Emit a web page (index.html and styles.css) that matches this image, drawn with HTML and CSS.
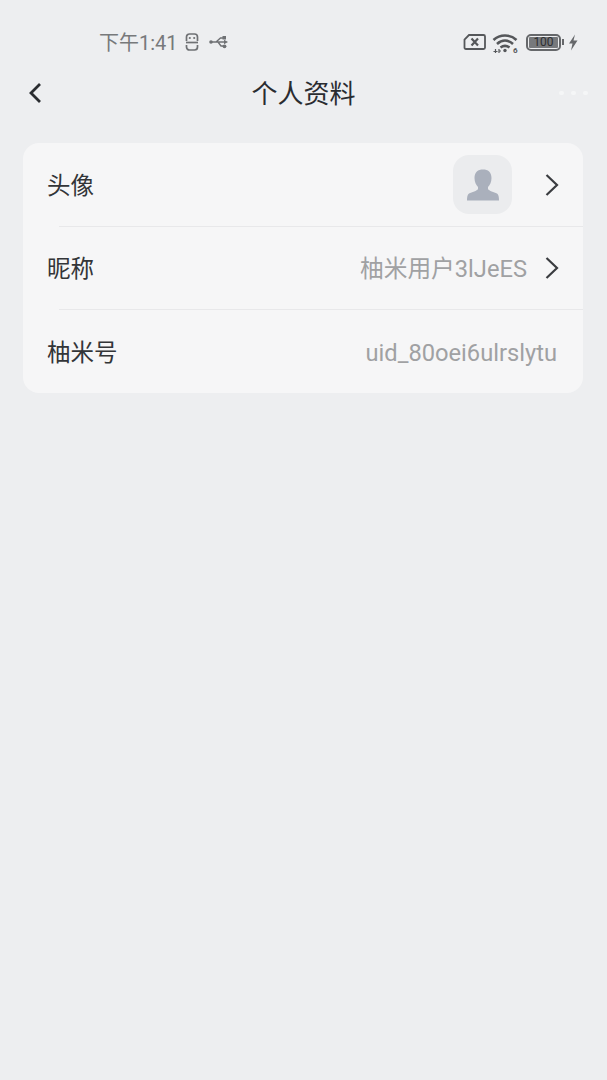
FILE: index.html
```html
<!DOCTYPE html>
<html lang="zh-CN">
<head>
    <meta charset="UTF-8">
    <meta name="viewport" content="width=device-width, initial-scale=1.0">
    <title>个人资料</title>
    <link rel="stylesheet" href="styles.css">
</head>
<body>
    <div class="status-bar">
        <div class="status-left">
            <span class="status-time">下午1:41</span>
            <svg class="icon-s" width="14" height="18" viewBox="0 0 14 18" fill="none" stroke="#6f7174" stroke-width="1.700">
                <path d="M1.500 8V4C1.500 2 3 1 4.500 1H9.500C11 1 12.500 2 12.500 4V8"/>
                <path d="M1 9.500H13"/>
                <path d="M12.500 12V14C12.500 16 11 17 9.500 17H4.500C3 17 1.500 16 1.500 14V12"/>
                <circle cx="4.800" cy="5" r="1.100" fill="#6f7174" stroke="none"/>
                <circle cx="9.200" cy="5" r="1.100" fill="#6f7174" stroke="none"/>
            </svg>
            <svg class="icon-usb" width="19" height="14" viewBox="0 0 19 14" fill="#6f7174" stroke="#6f7174" stroke-width="1.400">
                <circle cx="2" cy="7" r="1.800" stroke="none"/>
                <path d="M3 7H15M7 7L11.500 3H14M9 7L12 11H14" fill="none"/>
                <rect x="13.500" y="1" width="3.500" height="3.500" stroke="none"/>
                <circle cx="15.500" cy="11.300" r="1.900" stroke="none"/>
                <path d="M15 4.800L19 7L15 9.200Z" stroke="none"/>
            </svg>
        </div>
        <div class="status-right">
            <svg width="23" height="18" viewBox="0 0 23 18" fill="none" stroke="#55575a" stroke-width="1.800">
                <path d="M6 2H20.500C21.300 2 22 2.700 22 3.500V14.500C22 15.300 21.300 16 20.500 16H3C2 16 1.500 15.300 1.500 14.500V6.500Z"/>
                <path d="M8.500 5.500L15 12.500M15 5.500L8.500 12.500" stroke-width="2.200"/>
            </svg>
            <svg class="icon-wifi" width="27" height="22" viewBox="0 0 27 22" fill="none" stroke="#55575a" stroke-width="2.600">
                <path d="M1.500 8C8 2 18 2 24.500 8"/>
                <path d="M5 12C10 7.500 16 7.500 21 12"/>
                <path d="M8.500 15.500C11.500 13.300 14.500 13.300 17.500 15.500"/>
                <circle cx="13" cy="18.500" r="1.700" fill="#55575a" stroke="none"/>
                <path d="M3.500 17V21M1.500 19.500H5.500M7 17V21M7 19H9" stroke-width="1.200"/>
                <text x="21" y="21" class="wifi-six" fill="#55575a" stroke="none">6</text>
            </svg>
            <div class="battery">
                <div class="battery-body"><span class="battery-level">100</span></div>
                <span class="battery-tip"></span>
            </div>
            <svg class="icon-bolt" width="10" height="17" viewBox="0 0 10 17" fill="#66686b">
                <path d="M7 0.500L1 9.500H4.500L3 16.500L9.500 6.500H5.500Z"/>
            </svg>
        </div>
    </div>

    <header class="nav-bar">
        <svg class="back-icon" width="16" height="24" viewBox="0 0 16 24" fill="none" stroke="#2a2c30" stroke-width="2.800">
            <path d="M13 3L4 12L13 21"/>
        </svg>
        <h1 class="nav-title">个人资料</h1>
        <div class="nav-dots"><span></span><span></span><span></span></div>
    </header>

    <section class="card">
        <div class="row">
            <span class="row-label">头像</span>
            <div class="row-right">
                <div class="avatar">
                    <svg width="34" height="34" viewBox="0 0 34 34" fill="#aab0bc">
                        <path d="M17 1.500C22 1.500 25.500 4 25.500 10C25.500 14 24 17 22 19V21C23 23 28 24 31 25.500C32.500 26.500 33 29 33 32.500H1C1 29 1.500 26.500 3 25.500C6 24 11 23 12 21V19C10 17 8.500 14 8.500 10C8.500 4 12 1.500 17 1.500Z"/>
                    </svg>
                </div>
                <svg class="chevron" width="16" height="24" viewBox="0 0 16 24" fill="none" stroke="#3a3c40" stroke-width="2.200">
                    <path d="M2.500 2L13 12L2.500 22"/>
                </svg>
            </div>
        </div>
        <div class="row">
            <span class="row-label">昵称</span>
            <div class="row-right">
                <span class="row-value">柚米用户3lJeES</span>
                <svg class="chevron" width="16" height="24" viewBox="0 0 16 24" fill="none" stroke="#3a3c40" stroke-width="2.200">
                    <path d="M2.500 2L13 12L2.500 22"/>
                </svg>
            </div>
        </div>
        <div class="row row-last">
            <span class="row-label">柚米号</span>
            <div class="row-right">
                <span class="row-value row-value-id">uid_80oei6ulrslytu</span>
            </div>
        </div>
    </section>
</body>
</html>
```

FILE: styles.css
```css
body {
    margin: 0;
    width: 607px;
    height: 1080px;
    overflow: hidden;
    background-color: #edeef0;
    font-family: Roboto, "Noto Sans CJK SC", sans-serif;
}

.status-bar {
    height: 64px;
    padding: 20px 29px 0 99px;
    box-sizing: border-box;
    display: flex;
    justify-content: space-between;
    align-items: center;
}

.status-left {
    display: flex;
    align-items: center;
}

.status-time {
    margin-bottom: 2px;
    font-size: 20px;
    color: #77797b;
}

.icon-s {
    margin-left: 7px;
}

.icon-usb {
    margin-left: 10px;
}

.status-right {
    display: flex;
    align-items: center;
    gap: 6px;
}

.icon-wifi {
    margin-top: 1px;
}

.wifi-six {
    font-size: 8px;
    font-weight: bold;
}

.battery {
    display: flex;
    align-items: center;
    margin-left: 1px;
}

.battery-body {
    width: 35px;
    height: 17px;
    border: 2px solid #66686b;
    border-radius: 5px;
    box-sizing: border-box;
    padding: 1px;
    display: flex;
}

.battery-level {
    flex: 1;
    background-color: #77797c;
    border-radius: 1px;
    font-size: 12px;
    line-height: 11px;
    text-align: center;
    color: #2e2f31;
}

.battery-tip {
    width: 2px;
    height: 6px;
    margin-left: 1px;
    background-color: #66686b;
}

.icon-bolt {
    margin-left: -2px;
}

.nav-bar {
    height: 58px;
    padding: 0 19px 0 27px;
    display: flex;
    align-items: center;
    justify-content: space-between;
    position: relative;
}

.nav-title {
    position: absolute;
    left: 0;
    right: 0;
    margin: 0 0 4px;
    text-align: center;
    font-size: 26px;
    font-weight: 400;
    color: #2a2c30;
}

.nav-dots {
    display: flex;
    gap: 7px;
}

.nav-dots span {
    width: 5px;
    height: 4px;
    border-radius: 2px;
    background-color: #f5f6f7;
}

.card {
    margin: 21px 24px 0 23px;
    background-color: #f6f6f7;
    border-radius: 16px;
}

.row {
    height: 83px;
    padding: 0 26px 0 24px;
    display: flex;
    align-items: center;
    justify-content: space-between;
    position: relative;
}

.row-last {
    height: 84px;
}

.row + .row::before {
    content: "";
    position: absolute;
    top: 0;
    left: 36px;
    right: 0;
    height: 1px;
    background-color: #e8e8ea;
}

.row-label {
    margin-bottom: 2px;
    font-size: 23.500px;
    color: #333538;
}

.row-last .row-label {
    margin-bottom: 0;
}

.row-right {
    display: flex;
    align-items: center;
}

.row-value {
    margin-bottom: 2px;
    font-size: 23.700px;
    color: #a0a1a3;
}

.row-value-id {
    margin-bottom: 0;
    margin-top: 4px;
}

.avatar {
    width: 59px;
    height: 59px;
    margin-right: 15px;
    border-radius: 16px;
    background-color: #ebecee;
    display: flex;
    align-items: center;
    justify-content: center;
}

.chevron {
    margin-left: 17px;
    margin-right: -3px;
}
```
